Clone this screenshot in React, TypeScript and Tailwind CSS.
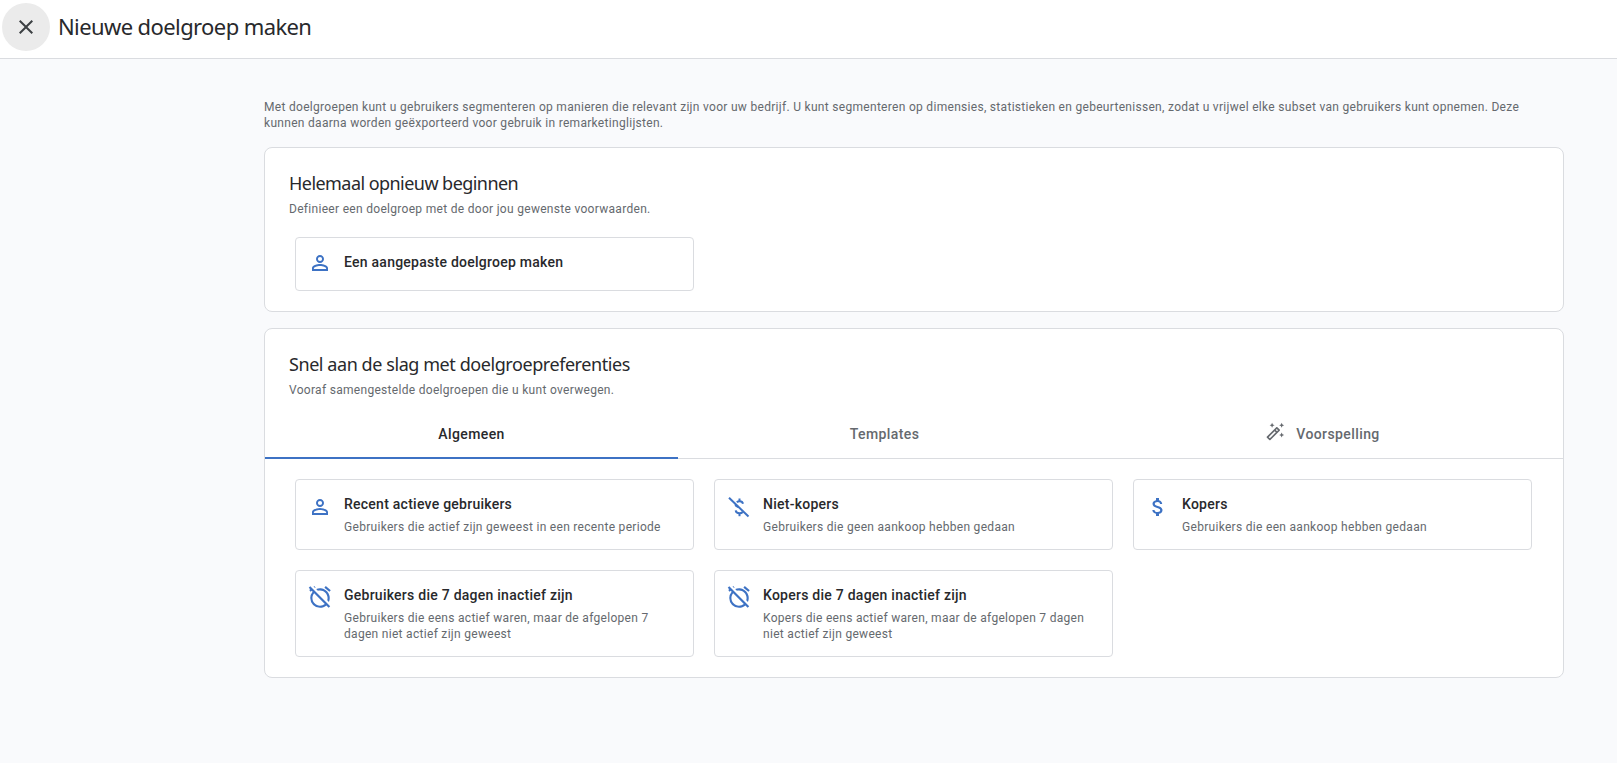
import type { ComponentType } from 'react';
import {
  MdAttachMoney,
  MdClose,
  MdOutlineAlarmOff,
  MdOutlineAutoFixHigh,
  MdPersonOutline,
} from 'react-icons/md';

type Option = {
  icon: ComponentType<{ className?: string }>;
  iconClass: string;
  title: string;
  description: string;
};

// money_off met lange schuine streep, zoals in de schermafbeelding
function MoneyOffIcon({ className }: { className?: string }) {
  return (
    <svg viewBox="0 0 24 24" fill="none" stroke="currentColor" strokeWidth="2" className={className}>
      <path d="M12.5 3.5v2.7" />
      <path d="M9.8 7.2c.8-.7 1.7-1 2.9-1 1.9 0 3 1 3.3 2.6" />
      <path d="M8.3 9.5c.3 1.2 1.4 2 3 2.5" />
      <path d="M8.7 15.3c.2 1.9 1.9 2.9 3.9 2.9 1.3 0 2.4-.4 3.1-1.2" />
      <path d="M12.5 18.2v3" />
      <path d="M2 2.8L21.5 21.5" />
    </svg>
  );
}

const options: Option[] = [
  {
    icon: MdPersonOutline,
    iconClass: 'mt-px size-6',
    title: 'Recent actieve gebruikers',
    description: 'Gebruikers die actief zijn geweest in een recente periode',
  },
  {
    icon: MoneyOffIcon,
    iconClass: 'mt-px size-6',
    title: 'Niet-kopers',
    description: 'Gebruikers die geen aankoop hebben gedaan',
  },
  {
    icon: MdAttachMoney,
    iconClass: 'mt-px size-6',
    title: 'Kopers',
    description: 'Gebruikers die een aankoop hebben gedaan',
  },
  {
    icon: MdOutlineAlarmOff,
    iconClass: '-mx-px -mt-px size-[26px]',
    title: 'Gebruikers die 7 dagen inactief zijn',
    description: 'Gebruikers die eens actief waren, maar de afgelopen 7 dagen niet actief zijn geweest',
  },
  {
    icon: MdOutlineAlarmOff,
    iconClass: '-mx-px -mt-px size-[26px]',
    title: 'Kopers die 7 dagen inactief zijn',
    description: 'Kopers die eens actief waren, maar de afgelopen 7 dagen niet actief zijn geweest',
  },
];

function OptionCard({ icon: Icon, iconClass, title, description }: Option) {
  return (
    <div className="flex gap-3 rounded border border-[#dadce0] bg-white pl-3 pr-4 py-[14px]">
      <Icon className={`${iconClass} shrink-0 text-[#3d72c4]`} />
      <div>
        <div className="text-sm leading-5 font-medium tracking-[0.25px] text-[#28292c]">{title}</div>
        <div className="mt-[5px] text-xs leading-4 tracking-[0.3px] text-[#65696e]">{description}</div>
      </div>
    </div>
  );
}

export default function App() {
  return (
    <div className="min-h-screen bg-[#f9fafc] font-['Roboto',sans-serif]">
      {/* kop */}
      <header className="flex h-[59px] items-start border-b border-[#dadce0] bg-white pl-[2px] pt-[3px]">
        <button className="flex size-12 items-center justify-center rounded-full bg-[#ebebeb] text-[#3c4043]">
          <MdClose className="size-6" />
        </button>
        <h1 className="ml-2 text-[22px] leading-[46px] tracking-[-0.6px] text-[#28292c] font-['Noto_Sans',sans-serif]">
          Nieuwe doelgroep maken
        </h1>
      </header>

      <main className="pl-[264px] pr-[53px] pt-10">
        <p className="mb-4 pr-10 text-xs leading-4 tracking-[0.3px] text-[#65696e]">
          Met doelgroepen kunt u gebruikers segmenteren op manieren die relevant zijn voor uw bedrijf. U kunt segmenteren op dimensies, statistieken en gebeurtenissen, zodat u vrijwel elke subset van gebruikers kunt opnemen. Deze kunnen daarna worden geëxporteerd voor gebruik in remarketinglijsten.
        </p>

        {/* helemaal opnieuw */}
        <section className="mb-4 rounded-lg border border-[#dadce0] bg-white px-6 pb-5 pt-6">
          <h2 className="text-lg leading-[22px] tracking-[-0.55px] text-[#28292c] font-['Noto_Sans',sans-serif]">
            Helemaal opnieuw beginnen
          </h2>
          <p className="mt-[7px] text-xs leading-4 tracking-[0.3px] text-[#65696e]">
            Definieer een doelgroep met de door jou gewenste voorwaarden.
          </p>
          <div className="mt-5 ml-[6px] flex h-[54px] w-[399px] items-center gap-3 rounded border border-[#dadce0] pb-[2px] pl-3">
            <MdPersonOutline className="size-6 text-[#3d72c4]" />
            <span className="mb-[2px] text-sm font-medium tracking-[0.25px] text-[#28292c]">Een aangepaste doelgroep maken</span>
          </div>
        </section>

        {/* doelgroepreferenties */}
        <section className="rounded-lg border border-[#dadce0] bg-white pb-5 pt-6">
          <div className="px-6">
            <h2 className="text-lg leading-[23px] tracking-[-0.43px] text-[#28292c] font-['Noto_Sans',sans-serif]">
              Snel aan de slag met doelgroepreferenties
            </h2>
            <p className="mt-[6px] text-xs leading-4 tracking-[0.3px] text-[#65696e]">
              Vooraf samengestelde doelgroepen die u kunt overwegen.
            </p>
          </div>

          <div className="mt-3 flex h-[49px] border-b border-[#dadce0] text-sm font-medium tracking-[0.4px]">
            <div className="-mb-px flex w-[413px] items-center justify-center border-b-2 border-[#3d72c4] text-[#28292c]">
              Algemeen
            </div>
            <div className="flex w-[413px] items-center justify-center text-[#65696e]">Templates</div>
            <div className="flex flex-1 items-center justify-center gap-[11px] pr-[9px] text-[#65696e]">
              <MdOutlineAutoFixHigh className="mb-[5px] size-5" />
              Voorspelling
            </div>
          </div>

          <div className="mt-5 grid grid-cols-3 gap-5 pl-[30px] pr-[31px]">
            {options.map(option => (
              <OptionCard key={option.title} {...option} />
            ))}
          </div>
        </section>
      </main>
    </div>
  );
}
